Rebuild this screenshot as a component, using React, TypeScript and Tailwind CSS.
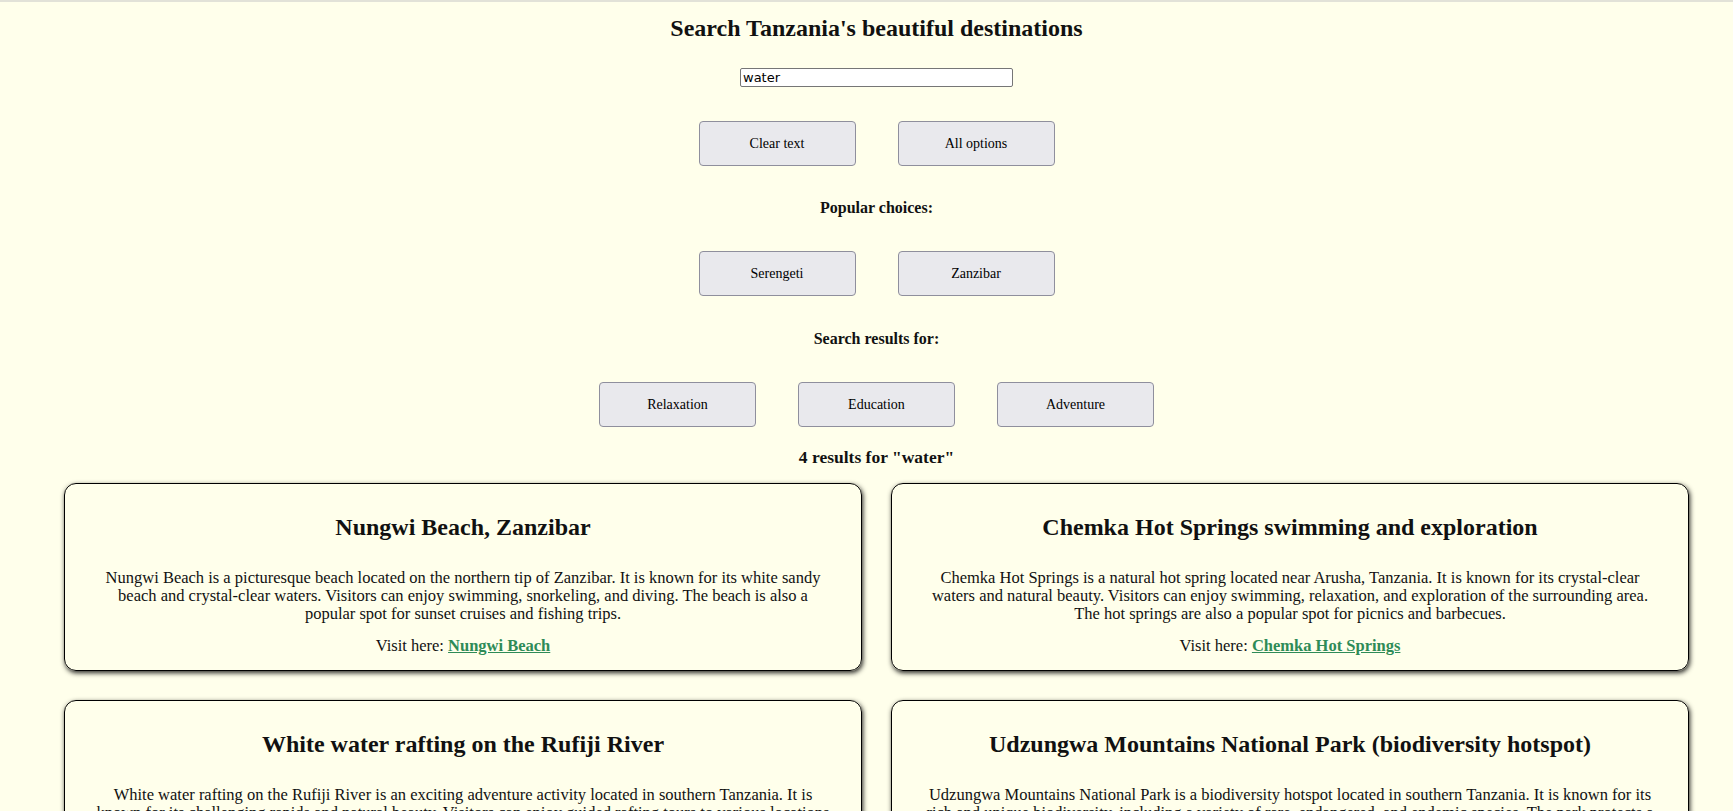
import { useState } from 'react';

type Destination = {
  title: string;
  description: string;
  linkText: string;
};

const destinations: Destination[] = [
  {
    title: 'Nungwi Beach, Zanzibar',
    description:
      'Nungwi Beach is a picturesque beach located on the northern tip of Zanzibar. It is known for its white sandy beach and crystal-clear waters. Visitors can enjoy swimming, snorkeling, and diving. The beach is also a popular spot for sunset cruises and fishing trips.',
    linkText: 'Nungwi Beach'
  },
  {
    title: 'Chemka Hot Springs swimming and exploration',
    description:
      'Chemka Hot Springs is a natural hot spring located near Arusha, Tanzania. It is known for its crystal-clear waters and natural beauty. Visitors can enjoy swimming, relaxation, and exploration of the surrounding area. The hot springs are also a popular spot for picnics and barbecues.',
    linkText: 'Chemka Hot Springs'
  },
  {
    title: 'White water rafting on the Rufiji River',
    description:
      'White water rafting on the Rufiji River is an exciting adventure activity located in southern Tanzania. It is known for its challenging rapids and natural beauty. Visitors can enjoy guided rafting tours to various locations along the river. The river is also a popular spot for wildlife viewing.',
    linkText: 'Rufiji River'
  },
  {
    title: 'Udzungwa Mountains National Park (biodiversity hotspot)',
    description:
      'Udzungwa Mountains National Park is a biodiversity hotspot located in southern Tanzania. It is known for its rich and unique biodiversity, including a variety of rare, endangered, and endemic species. The park protects a large area of forest and is a popular spot for hiking.',
    linkText: 'Udzungwa Mountains'
  }
];

const Button = ({ label, onClick }: { label: string; onClick?: () => void }) => (
  <button
    onClick={onClick}
    className="w-[157px] h-[45px] bg-[#e9e9ed] border border-[#8f8f9d] rounded-[4px] text-[14px] text-black"
  >
    {label}
  </button>
);

const App = () => {
  const [query, setQuery] = useState('water');

  return (
    <div
      className="min-h-screen bg-[#ffffeb] text-[#111] pl-[20px] border-t-2 border-[#e2e2d8]"
      style={{ fontFamily: '"Liberation Serif", serif' }}
    >
      <h1 className="mt-[12px] text-center text-[24px] leading-[28px] font-bold">
        Search Tanzania's beautiful destinations
      </h1>

      <div className="mt-[26px] flex justify-center">
        <input
          value={query}
          onChange={(e) => setQuery(e.target.value)}
          className="w-[273px] h-[19px] bg-white border border-[#767676] rounded-[2px] px-[2px] text-[13px] leading-[17px] text-black outline-none"
          style={{ fontFamily: '"DejaVu Sans", sans-serif' }}
        />
      </div>

      <div className="mt-[34px] flex justify-center gap-[42px]">
        <Button label="Clear text" onClick={() => setQuery('')} />
        <Button label="All options" />
      </div>

      <h3 className="mt-[30px] text-center text-[16px] leading-[24px] font-bold">
        Popular choices:
      </h3>

      <div className="mt-[31px] flex justify-center gap-[42px]">
        <Button label="Serengeti" />
        <Button label="Zanzibar" />
      </div>

      <h3 className="mt-[31px] text-center text-[16px] leading-[24px] font-bold">
        Search results for:
      </h3>

      <div className="mt-[31px] flex justify-center gap-[42px]">
        <Button label="Relaxation" />
        <Button label="Education" />
        <Button label="Adventure" />
      </div>

      <h3 className="mt-[18px] text-center text-[17.5px] leading-[24px] font-bold">
        4 results for "water"
      </h3>

      <div className="mt-[14px] px-[44px] grid grid-cols-2 gap-[29px]">
        {destinations.map((d, i) => (
          <div
            key={`dest-${i}`}
            className="border border-black rounded-[12px] px-[30px] pt-[28px] pb-[15px] text-center shadow-[1px_2px_5px_rgba(0,0,0,0.85)]"
          >
            <h2 className="text-[24px] leading-[30px] font-bold">{d.title}</h2>
            <p className="mt-[27px] text-[16.5px] leading-[18px]">{d.description}</p>
            <p className="mt-[14px] text-[16.5px] leading-[18px]">
              Visit here:{' '}
              <a href="#" className="font-bold text-[#2e8b57] underline">
                {d.linkText}
              </a>
            </p>
          </div>
        ))}
      </div>

      <div className="h-[40px]" />
    </div>
  );
};

export default App;
